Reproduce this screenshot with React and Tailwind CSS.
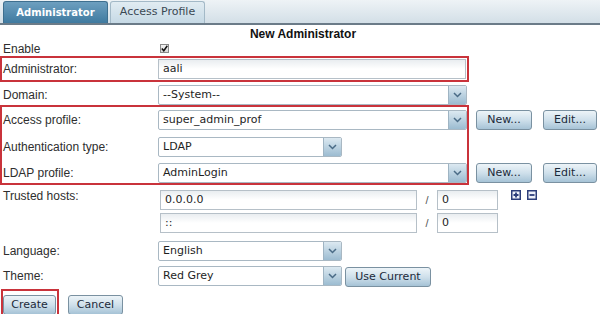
import React from 'react'

const TAHOMA = "font-['DejaVu_Sans',Verdana,sans-serif]"

function Chevron() {
  return (
    <svg width="9" height="6" viewBox="0 0 9 6">
      <path d="M1 1 L4.5 4.5 L8 1" fill="none" stroke="#4a6b86" strokeWidth="1.5" />
    </svg>
  )
}

function Select({ value, w }) {
  return (
    <div className={`${w} h-[20px] flex border border-[#a9b8c3] rounded-[2px] bg-white overflow-hidden`}>
      <span className={`flex-1 pl-[4px] leading-[18px] text-[11px] text-[#1e1e1e] ${TAHOMA}`}>{value}</span>
      <span className="w-[18px] h-full flex items-center justify-center border-l border-[#9fb4c3] bg-gradient-to-b from-[#dce9f1] to-[#9cbcd1]">
        <Chevron />
      </span>
    </div>
  )
}

function TextInput({ value, w }) {
  return (
    <div className={`${w} h-[20px] border border-[#b6c0c8] bg-gradient-to-b from-[#e9edf0] via-white to-white pl-[4px] leading-[18px] text-[11px] text-[#1e1e1e] ${TAHOMA}`}>
      {value}
    </div>
  )
}

function Btn({ children, w }) {
  return (
    <button className={`${w} h-[20px] border border-[#7a91a1] rounded-[3px] bg-gradient-to-b from-[#edf4f8] via-[#cfe0eb] to-[#a6c3d6] text-[11px] leading-[18px] text-[#1b2a3a] text-center ${TAHOMA}`}>
      {children}
    </button>
  )
}

function PlusMinus({ minus }) {
  return (
    <svg width="10" height="10" viewBox="0 0 10 10">
      <rect x="0" y="0" width="10" height="10" fill="#2c3d7a" />
      <rect x="1.5" y="1.5" width="7" height="7" fill="#eef1fa" />
      <path d={minus ? 'M2.5 5 H7.5' : 'M2.5 5 H7.5 M5 2.5 V7.5'} stroke="#2c3d7a" strokeWidth="1.8" />
    </svg>
  )
}

export default function App() {
  const label = 'text-[12px] text-[#2e2e2e] leading-[14px]'
  return (
    <div className="w-[600px] h-[314px] bg-white overflow-hidden font-['Liberation_Sans',Arial,sans-serif]">
      {/* tabs */}
      <div className="h-[25px] flex items-end gap-[2px] pl-[3px] bg-gradient-to-b from-[#eef3f6] to-[#d3dfe7] border-b-2 border-[#6b7b88]">
        <div className={`w-[105px] h-[22px] flex items-center justify-center rounded-t-[3px] border border-b-0 border-[#3e6f8f] bg-gradient-to-b from-[#6d9fbf] to-[#3f7aa0] text-white font-bold text-[10px] ${TAHOMA}`}>
          Administrator
        </div>
        <div className={`w-[95px] h-[22px] flex items-center justify-center rounded-t-[3px] border border-b-0 border-[#a3b9c7] bg-gradient-to-b from-[#e1ecf2] to-[#c6d9e5] text-[#3a4853] text-[11px] ${TAHOMA}`}>
          Access Profile
        </div>
      </div>

      <div className="h-[16px] text-center font-bold text-[12px] leading-[18px] text-[#111] pl-[6px]">New Administrator</div>

      {/* enable */}
      <div className="h-[15px] flex items-center">
        <span className={`w-[160px] pl-[3px] ${label}`}>Enable</span>
        <span className="w-[9px] h-[9px] border border-[#8a8a8a] bg-gradient-to-b from-[#f4f4f4] to-[#d8d8d8] flex items-center justify-center">
          <svg width="7" height="7" viewBox="0 0 7 7">
            <path d="M0.8 3.6 L2.8 5.8 L6.3 0.8" fill="none" stroke="#111" strokeWidth="1.5" />
          </svg>
        </span>
      </div>

      {/* administrator (highlighted) */}
      <div className="w-[469px] h-[26px] border-2 border-[#c9333b] flex items-center">
        <span className={`w-[156px] pl-[1px] ${label}`}>Administrator:</span>
        <TextInput value="aali" w="w-[308px]" />
      </div>

      {/* domain */}
      <div className="h-[23px] flex items-end">
        <span className={`w-[158px] pl-[3px] pb-[3px] ${label}`}>Domain:</span>
        <Select value="--System--" w="w-[309px]" />
      </div>

      {/* profile block */}
      <div className="flex">
        <div className="w-[469px] h-[80px] border-2 border-[#c9333b] pt-[3px] flex flex-col gap-[6px]">
          <div className="flex items-center">
            <span className={`w-[156px] pl-[1px] ${label}`}>Access profile:</span>
            <Select value="super_admin_prof" w="w-[309px]" />
          </div>
          <div className="flex items-center mt-[1px]">
            <span className={`w-[156px] pl-[1px] ${label}`}>Authentication type:</span>
            <Select value="LDAP" w="w-[184px]" />
          </div>
          <div className="flex items-center">
            <span className={`w-[156px] pl-[1px] ${label}`}>LDAP profile:</span>
            <Select value="AdminLogin" w="w-[309px]" />
          </div>
        </div>
        <div className="flex flex-col pt-[5px] pl-[7px]">
          <div className="flex gap-[11px]">
            <Btn w="w-[56px]">New...</Btn>
            <Btn w="w-[54px]">Edit...</Btn>
          </div>
          <div className="flex gap-[11px] mt-[33px]">
            <Btn w="w-[56px]">New...</Btn>
            <Btn w="w-[54px]">Edit...</Btn>
          </div>
        </div>
      </div>

      {/* trusted hosts */}
      <div className="flex mt-[5px]">
        <span className={`w-[160px] pl-[3px] -mt-[1px] ${label}`}>Trusted hosts:</span>
        <div className="flex flex-col gap-[3px]">
          <div className="flex items-center">
            <TextInput value="0.0.0.0" w="w-[257px]" />
            <span className="w-[20px] text-center text-[11px] text-[#555]">/</span>
            <TextInput value="0" w="w-[61px]" />
            <div className="flex gap-[6px] ml-[13px] self-start">
              <PlusMinus />
              <PlusMinus minus />
            </div>
          </div>
          <div className="flex items-center">
            <TextInput value="::" w="w-[257px]" />
            <span className="w-[20px] text-center text-[11px] text-[#555]">/</span>
            <TextInput value="0" w="w-[61px]" />
          </div>
        </div>
      </div>

      {/* language / theme */}
      <div className="flex items-center mt-[8px]">
        <span className={`w-[158px] pl-[3px] ${label}`}>Language:</span>
        <Select value="English" w="w-[184px]" />
      </div>
      <div className="flex items-center mt-[3px]">
        <span className={`w-[158px] pl-[3px] ${label}`}>Theme:</span>
        <Select value="Red Grey" w="w-[184px]" />
        <div className="ml-[3px] -mt-[1px]">
          <Btn w="w-[86px]">Use Current</Btn>
        </div>
      </div>

      {/* actions */}
      <div className="flex items-center mt-[2px] pl-[1px]">
        <div className="border-2 border-[#c9333b] pl-0 pr-[1px] py-0">
          <Btn w="w-[53px]">Create</Btn>
        </div>
        <div className="ml-[9px]">
          <Btn w="w-[55px]">Cancel</Btn>
        </div>
      </div>
    </div>
  )
}
